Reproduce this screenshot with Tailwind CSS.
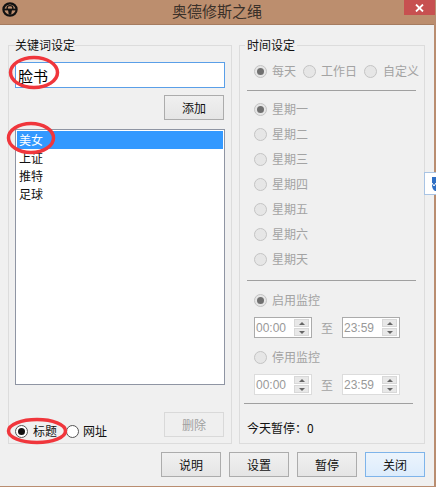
<!DOCTYPE html>
<html lang="zh">
<head>
  <meta charset="UTF-8" />
  <title>奥德修斯之绳</title>
  <script src="https://cdn.jsdelivr.net/npm/@tailwindcss/browser@4"></script>
</head>
<body class="bg-white">
  <div class="relative w-[436px] h-[487px] overflow-hidden font-['Noto_Sans_CJK_SC','Liberation_Sans',sans-serif] text-[12px] leading-[16px] text-[#111]">
    <div class="w-[436px] h-[487px] bg-[#f0f0f0] border-r-2 border-b border-[#b98d70] flex flex-col">
      <!-- title bar -->
      <header class="relative h-[25px] shrink-0 bg-[#bc8e6e] border-b border-[#a67c60] flex items-center justify-center pb-[3px] text-[15px] text-[#3a3029]">
        <svg class="absolute left-[2px] top-[2px]" width="16" height="15" viewBox="0 0 16 15">
          <ellipse cx="8" cy="7.5" rx="6.6" ry="6.2" fill="none" stroke="#111" stroke-width="2.2"/>
          <path d="M5.2 7V5.6Q5.2 3.6 8 3.6Q10.8 3.6 10.8 5.6V7" fill="none" stroke="#111" stroke-width="1.3"/>
          <rect x="2" y="6.6" width="12" height="1.8" fill="#111"/>
          <path d="M6 8H10L9.2 12.5H6.8Z" fill="#111"/>
        </svg>
        <span>奥德修斯之绳</span>
        <div class="absolute right-[-1px] top-0 w-[31px] h-[15px] bg-[#c75050] flex items-center justify-center">
          <svg width="9" height="8" viewBox="0 0 9 8"><path d="M1 0.5L8 7.5M8 0.5L1 7.5" stroke="#fff" stroke-width="1.8"/></svg>
        </div>
      </header>

      <main class="flex-1 flex flex-col pl-[8px] pr-[9px]">
        <div class="flex gap-[7px] pt-[13px]">
          <!-- keywords -->
          <fieldset class="w-[224px] h-[406px] border border-[#dcdcdc] px-[6px] flex flex-col">
            <legend class="text-[12px] leading-[14px] whitespace-nowrap">关键词设定</legend>
            <input value="脸书" class="block w-[210px] h-[26px] mt-[10px] bg-white border border-[#5a9fe8] px-[2px] text-[15px] outline-none text-black" />
            <div class="flex justify-end pr-[1px] mt-[7px]">
              <button class="w-[60px] h-[25px] border border-[#acacac] bg-gradient-to-b from-[#f0f0f0] to-[#e5e5e5]">添加</button>
            </div>
            <ul class="w-[210px] h-[256px] mt-[9px] bg-white border border-[#8f95a3] p-[1px] leading-[18px]">
              <li class="h-[18px] bg-[#3399ff] text-white pl-[2px]">美女</li>
              <li class="h-[18px] pl-[2px]">上证</li>
              <li class="h-[18px] pl-[2px]">推特</li>
              <li class="h-[18px] pl-[2px]">足球</li>
            </ul>
            <div class="flex items-start justify-between mt-[27px] pr-[1px]">
              <div class="flex items-center mt-[11px] whitespace-nowrap">
                <span class="w-[13px] h-[13px] rounded-full border border-[#555] bg-white flex items-center justify-center"><span class="w-[7px] h-[7px] rounded-full bg-[#111]"></span></span>
                <span class="ml-[5px]">标题</span>
                <span class="w-[13px] h-[13px] rounded-full border border-[#555] bg-white ml-[9px]"></span>
                <span class="ml-[4px]">网址</span>
              </div>
              <button class="w-[60px] h-[25px] border border-[#d9d9d9] bg-[#efefef] text-[#a0a0a0]">删除</button>
            </div>
          </fieldset>

          <!-- time settings -->
          <fieldset class="w-[186px] h-[406px] border border-[#dcdcdc] flex flex-col text-[#a3a3a3]">
            <legend class="ml-[5px] px-[2px] text-[12px] leading-[14px] whitespace-nowrap text-[#111]">时间设定</legend>
            <div class="flex items-center mt-[9px] pl-[14px] h-[20px] whitespace-nowrap">
              <span class="w-[13px] h-[13px] rounded-full border border-[#c4c4c4] bg-[#e6e6e6] flex items-center justify-center"><span class="w-[7px] h-[7px] rounded-full bg-[#707070]"></span></span>
              <span class="ml-[5px]">每天</span>
              <span class="w-[13px] h-[13px] rounded-full border border-[#c4c4c4] bg-[#e6e6e6] ml-[7px]"></span>
              <span class="ml-[5px]">工作日</span>
              <span class="w-[13px] h-[13px] rounded-full border border-[#c4c4c4] bg-[#e6e6e6] ml-[7px]"></span>
              <span class="ml-[6px]">自定义</span>
            </div>
            <div class="h-px w-[169px] ml-[7px] mt-[9px] bg-[#a0a0a0]"></div>
            <div class="flex flex-col gap-[5px] mt-[8px] pl-[14px]">
              <div class="flex items-center h-[20px]"><span class="w-[13px] h-[13px] rounded-full border border-[#c4c4c4] bg-[#e6e6e6] flex items-center justify-center"><span class="w-[7px] h-[7px] rounded-full bg-[#707070]"></span></span><span class="ml-[5px]">星期一</span></div>
              <div class="flex items-center h-[20px]"><span class="w-[13px] h-[13px] rounded-full border border-[#c4c4c4] bg-[#e6e6e6]"></span><span class="ml-[5px]">星期二</span></div>
              <div class="flex items-center h-[20px]"><span class="w-[13px] h-[13px] rounded-full border border-[#c4c4c4] bg-[#e6e6e6]"></span><span class="ml-[5px]">星期三</span></div>
              <div class="flex items-center h-[20px]"><span class="w-[13px] h-[13px] rounded-full border border-[#c4c4c4] bg-[#e6e6e6]"></span><span class="ml-[5px]">星期四</span></div>
              <div class="flex items-center h-[20px]"><span class="w-[13px] h-[13px] rounded-full border border-[#c4c4c4] bg-[#e6e6e6]"></span><span class="ml-[5px]">星期五</span></div>
              <div class="flex items-center h-[20px]"><span class="w-[13px] h-[13px] rounded-full border border-[#c4c4c4] bg-[#e6e6e6]"></span><span class="ml-[5px]">星期六</span></div>
              <div class="flex items-center h-[20px]"><span class="w-[13px] h-[13px] rounded-full border border-[#c4c4c4] bg-[#e6e6e6]"></span><span class="ml-[5px]">星期天</span></div>
            </div>
            <div class="h-px w-[169px] ml-[7px] mt-[11px] bg-[#a0a0a0]"></div>
            <div class="flex items-center h-[20px] mt-[9px] pl-[14px]"><span class="w-[13px] h-[13px] rounded-full border border-[#c4c4c4] bg-[#e6e6e6] flex items-center justify-center"><span class="w-[7px] h-[7px] rounded-full bg-[#707070]"></span></span><span class="ml-[5px]">启用监控</span></div>
            <div class="flex items-center mt-[7px] pl-[14px]">
              <div class="w-[58px] h-[21px] bg-white border border-[#ababab] flex items-center justify-between pl-[1px] pr-[2px] font-['Liberation_Sans'] text-[#999]">
                <span>00:00</span>
                <span class="w-[15px] flex flex-col gap-px">
                  <span class="h-[8px] bg-[#e8e8e8] border border-[#d8d8d8] flex items-center justify-center"><span class="border-x-[3px] border-x-transparent border-b-[3px] border-b-[#666]"></span></span>
                  <span class="h-[8px] bg-[#e8e8e8] border border-[#d8d8d8] flex items-center justify-center"><span class="border-x-[3px] border-x-transparent border-t-[3px] border-t-[#666]"></span></span>
                </span>
              </div>
              <span class="w-[30px] text-center">至</span>
              <div class="w-[58px] h-[21px] bg-white border border-[#ababab] flex items-center justify-between pl-[1px] pr-[2px] font-['Liberation_Sans'] text-[#999]">
                <span>23:59</span>
                <span class="w-[15px] flex flex-col gap-px">
                  <span class="h-[8px] bg-[#e8e8e8] border border-[#d8d8d8] flex items-center justify-center"><span class="border-x-[3px] border-x-transparent border-b-[3px] border-b-[#666]"></span></span>
                  <span class="h-[8px] bg-[#e8e8e8] border border-[#d8d8d8] flex items-center justify-center"><span class="border-x-[3px] border-x-transparent border-t-[3px] border-t-[#666]"></span></span>
                </span>
              </div>
            </div>
            <div class="flex items-center h-[20px] mt-[9px] pl-[14px]"><span class="w-[13px] h-[13px] rounded-full border border-[#c4c4c4] bg-[#e6e6e6]"></span><span class="ml-[5px]">停用监控</span></div>
            <div class="flex items-center mt-[7px] pl-[14px]">
              <div class="w-[58px] h-[21px] bg-white border border-[#dcdcdc] flex items-center justify-between pl-[1px] pr-[2px] font-['Liberation_Sans'] text-[#999]">
                <span>00:00</span>
                <span class="w-[15px] flex flex-col gap-px">
                  <span class="h-[8px] bg-[#e8e8e8] border border-[#d8d8d8] flex items-center justify-center"><span class="border-x-[3px] border-x-transparent border-b-[3px] border-b-[#666]"></span></span>
                  <span class="h-[8px] bg-[#e8e8e8] border border-[#d8d8d8] flex items-center justify-center"><span class="border-x-[3px] border-x-transparent border-t-[3px] border-t-[#666]"></span></span>
                </span>
              </div>
              <span class="w-[30px] text-center">至</span>
              <div class="w-[58px] h-[21px] bg-white border border-[#dcdcdc] flex items-center justify-between pl-[1px] pr-[2px] font-['Liberation_Sans'] text-[#999]">
                <span>23:59</span>
                <span class="w-[15px] flex flex-col gap-px">
                  <span class="h-[8px] bg-[#e8e8e8] border border-[#d8d8d8] flex items-center justify-center"><span class="border-x-[3px] border-x-transparent border-b-[3px] border-b-[#666]"></span></span>
                  <span class="h-[8px] bg-[#e8e8e8] border border-[#d8d8d8] flex items-center justify-center"><span class="border-x-[3px] border-x-transparent border-t-[3px] border-t-[#666]"></span></span>
                </span>
              </div>
            </div>
            <div class="h-px w-[169px] ml-[4px] mt-[8px] bg-[#a0a0a0]"></div>
            <div class="mt-[16px] pl-[7px] text-[#111]">今天暂停：0</div>
          </fieldset>
        </div>

        <!-- bottom buttons -->
        <div class="flex justify-end gap-[8px] mt-[8px]">
          <button class="w-[60px] h-[25px] border border-[#acacac] bg-gradient-to-b from-[#f0f0f0] to-[#e5e5e5]">说明</button>
          <button class="w-[60px] h-[25px] border border-[#acacac] bg-gradient-to-b from-[#f0f0f0] to-[#e5e5e5]">设置</button>
          <button class="w-[60px] h-[25px] border border-[#acacac] bg-gradient-to-b from-[#f0f0f0] to-[#e5e5e5]">暂停</button>
          <button class="w-[60px] h-[25px] border border-[#7eb4ea] bg-gradient-to-b from-[#ecf4fc] to-[#dcecfc]">关闭</button>
        </div>
      </main>
    </div>

    <!-- floating tab at the edge -->
    <div class="absolute left-[424px] top-[172px] w-[12px] h-[23px] bg-white border border-[#a9c4e4] border-r-0 flex items-center justify-end">
      <svg width="4" height="14" viewBox="0 0 4 14"><path d="M0 0H4V14H3Q0 12 0 8Z" fill="#2f6fc4"/><path d="M0 6L2 9L4 6" fill="none" stroke="#fff" stroke-width="1"/></svg>
    </div>

    <!-- red hand-drawn marks over the screenshot -->
    <svg class="absolute left-0 top-0 pointer-events-none" width="436" height="487" fill="none" stroke="#f0363c" stroke-width="3.5">
      <ellipse cx="34" cy="72.5" rx="23.5" ry="15"/>
      <ellipse cx="31" cy="138" rx="22.5" ry="14.5"/>
      <ellipse cx="37" cy="431" rx="28.5" ry="11.5"/>
    </svg>
  </div>
</body>
</html>
